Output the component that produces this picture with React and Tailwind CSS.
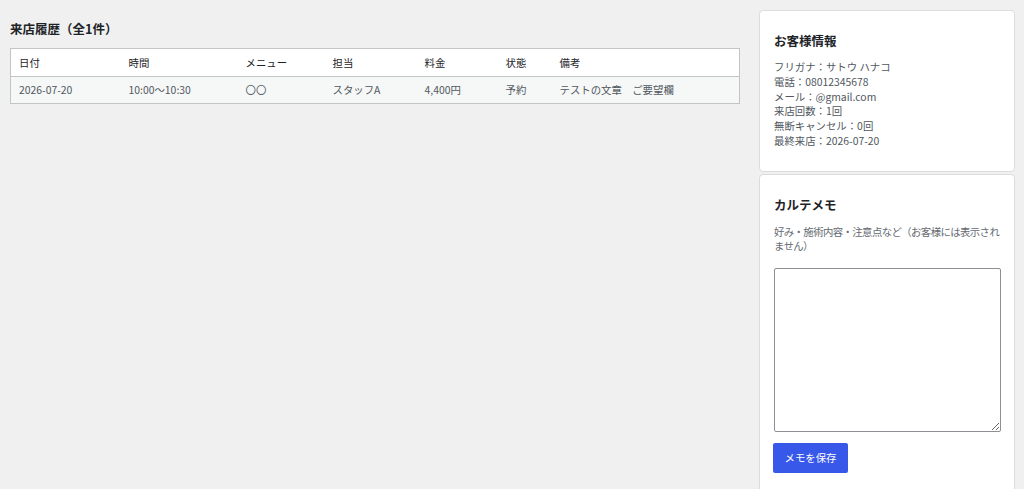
export default function App() {
  const heads = ["日付", "時間", "メニュー", "担当", "料金", "状態", "備考"];
  const row = ["2026-07-20", "10:00〜10:30", "〇〇", "スタッフA", "4,400円", "予約", "テストの文章　ご要望欄"];
  const info = [
    "フリガナ：サトウ ハナコ",
    "電話：08012345678",
    "メール：@gmail.com",
    "来店回数：1回",
    "無断キャンセル：0回",
    "最終来店：2026-07-20",
  ];
  return (
    <div
      className="min-h-screen bg-[#f0f0f1] flex gap-[19px] pl-[10px] pr-[9px] pt-[10px] text-[#1d2327]"
      style={{ fontFamily: '"Noto Sans CJK JP", "Noto Sans", sans-serif' }}
    >
      <div className="flex-1 flex flex-col">
        <h2 className="mt-[11px] mb-[11px] text-[12.5px] leading-[16px] font-bold">来店履歴（全1件）</h2>
        <table className="w-full table-fixed border border-[#c3c4c7] border-collapse text-[10.4px]">
          <colgroup>
            <col className="w-[110px]" />
            <col className="w-[117px]" />
            <col className="w-[87px]" />
            <col className="w-[92px]" />
            <col className="w-[81px]" />
            <col className="w-[54px]" />
            <col />
          </colgroup>
          <thead>
            <tr className="bg-white h-[28px]">
              {heads.map((h) => (
                <th key={h} className="text-left font-normal pl-[8px] text-[#1d2327] border-b border-[#c3c4c7]">
                  {h}
                </th>
              ))}
            </tr>
          </thead>
          <tbody>
            <tr className="bg-[#f6f7f7] h-[27px]">
              {row.map((v, i) => (
                <td key={i} className="pl-[8px] text-[#50575e] whitespace-nowrap">
                  {v}
                </td>
              ))}
            </tr>
          </tbody>
        </table>
      </div>
      <div className="w-[256px] flex flex-col gap-[2px]">
        <div className="h-[162px] bg-white border border-[#dcdcde] rounded-[4px] px-[14px] pt-[22px]">
          <h3 className="text-[12.5px] leading-[16px] font-bold mb-[11px]">お客様情報</h3>
          <div className="text-[10.4px] leading-[14.8px] text-[#50575e]">
            {info.map((t) => (
              <div key={t}>{t}</div>
            ))}
          </div>
        </div>
        <div className="bg-white border border-[#dcdcde] rounded-[4px] px-[13px] pt-[22px] pb-[24px]">
          <h3 className="ml-[1px] text-[12.5px] leading-[16px] font-bold mb-[12px]">カルテメモ</h3>
          <p className="ml-[1px] text-[10.4px] leading-[14px] tracking-[-0.6px] text-[#646970] mb-[15px]">
            好み・施術内容・注意点など（お客様には表示されません）
          </p>
          <textarea className="block ml-[1px] w-[227px] h-[164px] border border-[#8c8f94] rounded-[2px] bg-white resize-y"></textarea>
          <button className="mt-[11px] w-[75px] h-[30px] bg-[#3858e9] text-white text-[10.4px] rounded-[2px]">
            メモを保存
          </button>
        </div>
      </div>
    </div>
  );
}
